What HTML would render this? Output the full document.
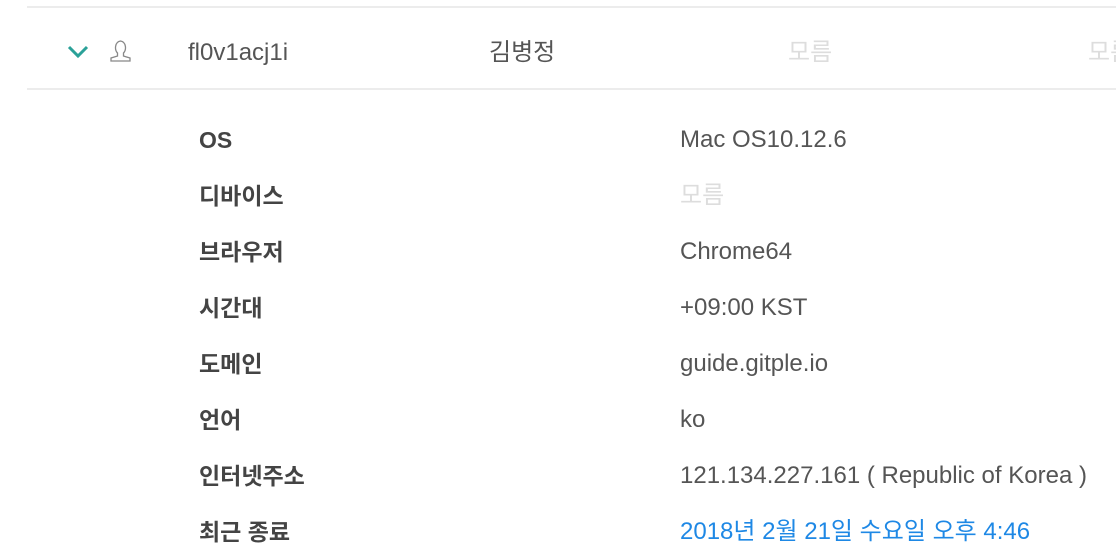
<!DOCTYPE html>
<html><head><meta charset="utf-8"><style>
body{margin:0;width:1116px;height:556px;overflow:hidden;background:#fff;font-family:"Liberation Sans","Noto Sans CJK KR",sans-serif;position:relative}
.ln{position:absolute;left:27px;right:0;height:2px;background:#ececec}
.t{position:absolute;white-space:nowrap;font-size:24px;color:#555;line-height:28px}
.lb{position:absolute;left:199px;font-size:23px;font-weight:bold;color:#444;line-height:28px;white-space:nowrap}
.v{position:absolute;left:680px;font-size:24px;color:#555;line-height:28px;white-space:nowrap}
</style></head><body>
<div class="ln" style="top:6px"></div>
<div class="ln" style="top:88px"></div>
<svg style="position:absolute;left:66px;top:44px" width="24" height="16" viewBox="0 0 24 16"><path d="M3 3 L12 12 L21 3" fill="none" stroke="#2aa198" stroke-width="3"/></svg>
<svg style="position:absolute;left:107px;top:37px" width="28" height="28" viewBox="0 0 28 28"><path d="M10.5 16 C7.5 13 7.5 5 13.5 4 C19.5 5 19.5 13 16.5 16 L16.5 19 L23 21 L23 24 L4 24 L4 21 L10.5 19 Z" fill="none" stroke="#888" stroke-width="1.3"/></svg>
<div class="t" style="left:188px;top:39px">fl0v1acj1i</div>
<div class="t" style="left:489px;top:39px">김병정</div>
<div class="t" style="left:788px;top:39px;color:#ddd">모름</div>
<div class="t" style="left:1088px;top:39px;color:#ddd">모름</div>

<div class="lb" style="top:126px">OS</div><div class="v" style="top:126px">Mac OS10.12.6</div>
<div class="lb" style="top:182px">디바이스</div><div class="v" style="top:182px;color:#ddd">모름</div>
<div class="lb" style="top:238px">브라우저</div><div class="v" style="top:238px">Chrome64</div>
<div class="lb" style="top:294px">시간대</div><div class="v" style="top:294px">+09:00 KST</div>
<div class="lb" style="top:350px">도메인</div><div class="v" style="top:350px">guide.gitple.io</div>
<div class="lb" style="top:406px">언어</div><div class="v" style="top:406px">ko</div>
<div class="lb" style="top:462px">인터넷주소</div><div class="v" style="top:462px">121.134.227.161 ( Republic of Korea )</div>
<div class="lb" style="top:518px">최근 종료</div><div class="v" style="top:518px;color:#1e88e5">2018년 2월 21일 수요일 오후 4:46</div>
</body></html>
